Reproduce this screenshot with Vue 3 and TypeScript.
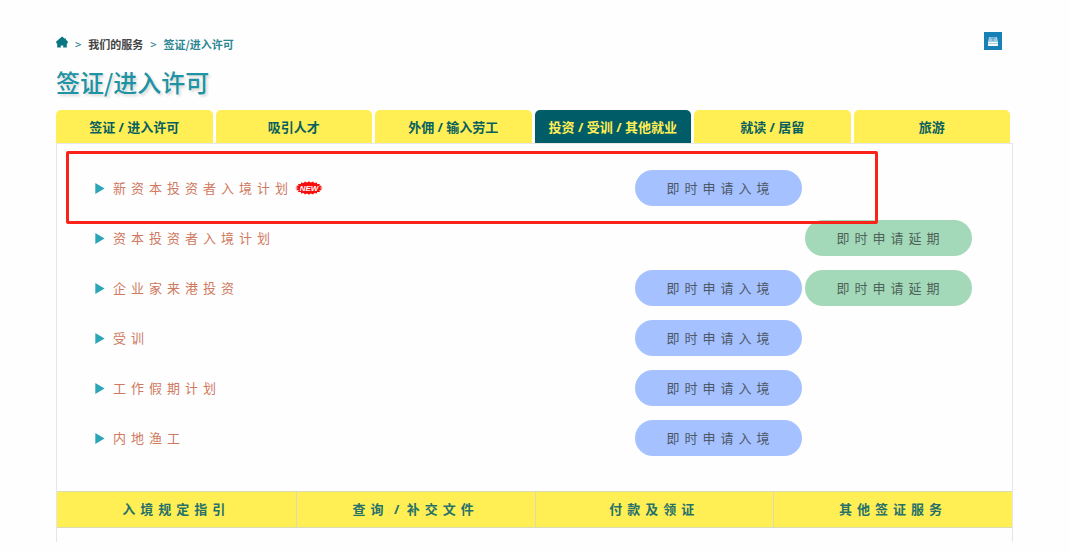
<script setup lang="ts">
import { ref } from 'vue'

interface Service {
  name: string
  isNew?: boolean
  entry?: boolean
  extension?: boolean
}

const tabs: string[] = [
  '签证 / 进入许可',
  '吸引人才',
  '外佣 / 输入劳工',
  '投资 / 受训 / 其他就业',
  '就读 / 居留',
  '旅游',
]
const activeTab = ref(3)

const services: Service[] = [
  { name: '新资本投资者入境计划', isNew: true, entry: true },
  { name: '资本投资者入境计划', extension: true },
  { name: '企业家来港投资', entry: true, extension: true },
  { name: '受训', entry: true },
  { name: '工作假期计划', entry: true },
  { name: '内地渔工', entry: true },
]

// Each link is a list of terms shown with a slash between them.
const footerLinks: string[][] = [['入境规定指引'], ['查询', '补交文件'], ['付款及领证'], ['其他签证服务']]

// Spiked oval outline for the "NEW" badge.
const spikes = 20
const burst = Array.from({ length: spikes * 2 }, (_, i) => {
  const angle = (Math.PI * i) / spikes
  const scale = i % 2 === 0 ? 1 : 0.82
  return `${(14 + 13.8 * scale * Math.cos(angle)).toFixed(2)},${(7 + 6.8 * scale * Math.sin(angle)).toFixed(2)}`
}).join(' ')
</script>

<template>
  <main class="page">
    <header class="top">
      <nav class="crumbs" aria-label="breadcrumb">
        <a href="#" class="home" aria-label="主页">
          <svg width="12" height="12" viewBox="0 0 12 12">
            <path d="M6 0.4 L8.6 2.4 L9.8 2.4 L10 3.8 L12 5.8 L11.4 7.4 L10.8 7.4 L10.8 11.4 L7.2 11.4 L7.2 9.6 L4.8 9.6 L4.8 11.4 L1.2 11.4 L1.2 7.4 L0.6 7.4 L0 5.8 Z" fill="#087783" />
          </svg>
        </a>
        <span class="sep">&gt;</span>
        <a href="#" class="parent">我们的服务</a>
        <span class="sep">&gt;</span>
        <span class="current">签证/进入许可</span>
      </nav>
      <button type="button" class="print" aria-label="打印">
        <svg width="18" height="18" viewBox="0 0 18 18">
          <rect width="18" height="18" fill="#1780b4" />
          <path d="M5 5 H13 L14 10 H4 Z" fill="#9fcbe2" />
          <path d="M6.5 6 H11.5 M9 6 V9" stroke="#4c9fc8" stroke-width="1" fill="none" />
          <rect x="4" y="10" width="10" height="4" fill="#f4fafd" />
          <path d="M4 11.5 H14" stroke="#a9d1e6" stroke-width="1" />
        </svg>
      </button>
    </header>

    <h1 class="title">签证/进入许可</h1>

    <nav class="tabs">
      <button
        v-for="(tab, i) in tabs"
        :key="tab"
        type="button"
        class="tab"
        :class="{ active: i === activeTab }"
        @click="activeTab = i"
      >{{ tab }}</button>
    </nav>

    <section class="panel">
      <ul class="services">
        <li v-for="service in services" :key="service.name" class="service">
          <a href="#" class="name">
            <svg class="arrow" width="10" height="11" viewBox="0 0 10 11">
              <path d="M0.3 0 L9.6 5.5 L0.3 11 Z" fill="#2ba6b6" />
            </svg>
            <span>{{ service.name }}</span>
            <svg v-if="service.isNew" class="new" width="28" height="14" viewBox="0 0 28 14">
              <polygon :points="burst" fill="#f80d0d" />
              <text x="14" y="10" text-anchor="middle" class="new-text">NEW</text>
            </svg>
          </a>
          <a v-if="service.entry" href="#" class="pill entry">即时申请入境</a>
          <a v-if="service.extension" href="#" class="pill extension">即时申请延期</a>
          <span v-if="service.isNew" class="highlight"></span>
        </li>
      </ul>
      <nav class="links">
        <a v-for="terms in footerLinks" :key="terms[0]" href="#" class="link"><template v-for="(term, i) in terms" :key="term"><span v-if="i > 0" class="slash">{{ ' / ' }}</span>{{ term }}</template></a>
      </nav>
    </section>
  </main>
</template>

<style>
body {
  margin: 0;
  background: #fefefe;
}
</style>

<style scoped>
.page {
  box-sizing: border-box;
  padding: 32px 57px 10px 56px;
  font-family: "Noto Sans", "Noto Sans CJK SC", sans-serif;
  font-size: 13px;
  line-height: 20px;
}
a {
  text-decoration: none;
}
button {
  border: 0;
  padding: 0;
  font: inherit;
  cursor: pointer;
}
.top {
  display: flex;
  align-items: flex-start;
  justify-content: space-between;
  padding-right: 11px;
}
.crumbs {
  display: flex;
  align-items: center;
  gap: 7px;
  height: 24px;
  font-family: "Noto Sans CJK SC", sans-serif;
  font-size: 11px;
  font-weight: 700;
}
.home {
  display: flex;
  padding-bottom: 4px;
}
.sep {
  color: #2b8590;
  font-weight: 500;
}
.parent {
  color: #444;
}
.current {
  color: #2b8793;
}
.print {
  display: flex;
  background: none;
}
.title {
  margin: 8px 0 10px;
  font-family: "Noto Sans CJK SC", sans-serif;
  font-size: 24px;
  line-height: 36px;
  font-weight: 500;
  color: #1d93a3;
  text-shadow: 2px 2px 3px rgba(0, 0, 0, 0.16);
}
.tabs {
  display: grid;
  grid-template-columns: repeat(6, 1fr);
  gap: 3px;
  padding-right: 3px;
}
.tab {
  height: 33px;
  border-radius: 5px 5px 0 0;
  background: #ffee54;
  color: #07605f;
  font-weight: 700;
  white-space: nowrap;
}
.tab.active {
  background: #005d68;
  color: #ffee54;
}
.panel {
  border: 1px solid #e6e6e6;
  border-bottom: 0;
  padding-bottom: 14px;
}
.services {
  list-style: none;
  display: flex;
  flex-direction: column;
  gap: 14px;
  margin: 0;
  padding: 26px 40px 35px 38px;
}
.service {
  position: relative;
  display: grid;
  grid-template-columns: 1fr 167px 167px;
  column-gap: 3px;
  height: 36px;
  align-items: center;
  letter-spacing: 5px;
}
.name {
  display: flex;
  align-items: center;
  color: #cf7960;
}
.arrow {
  margin-right: 8px;
}
.new {
  margin-left: 2px;
  letter-spacing: 0;
}
.new-text {
  font: italic 700 8px "Liberation Sans", sans-serif;
  fill: #fff;
}
.pill {
  box-sizing: border-box;
  height: 36px;
  padding-left: 4px;
  border-radius: 18px;
  line-height: 36px;
  text-align: center;
  color: #4d5866;
}
.entry {
  grid-column: 2;
  background: #a5c1ff;
}
.extension {
  grid-column: 3;
  background: #a3d9b9;
  color: #4d6359;
}
.highlight {
  position: absolute;
  z-index: 1;
  inset: -19px 94px -18px -29px;
  border: 3px solid #f9231a;
  border-radius: 2px;
  pointer-events: none;
}
.links {
  display: grid;
  grid-template-columns: repeat(4, 1fr);
  border-top: 1px solid #dcdcb4;
  border-bottom: 1px solid #dcdcb4;
  background: #ffee54;
}
.link {
  height: 35px;
  line-height: 35px;
  text-align: center;
  letter-spacing: 5px;
  font-weight: 700;
  color: #26726a;
}
.slash {
  letter-spacing: 2px;
}
.link + .link {
  border-left: 1px solid #dcdcb4;
}
</style>
